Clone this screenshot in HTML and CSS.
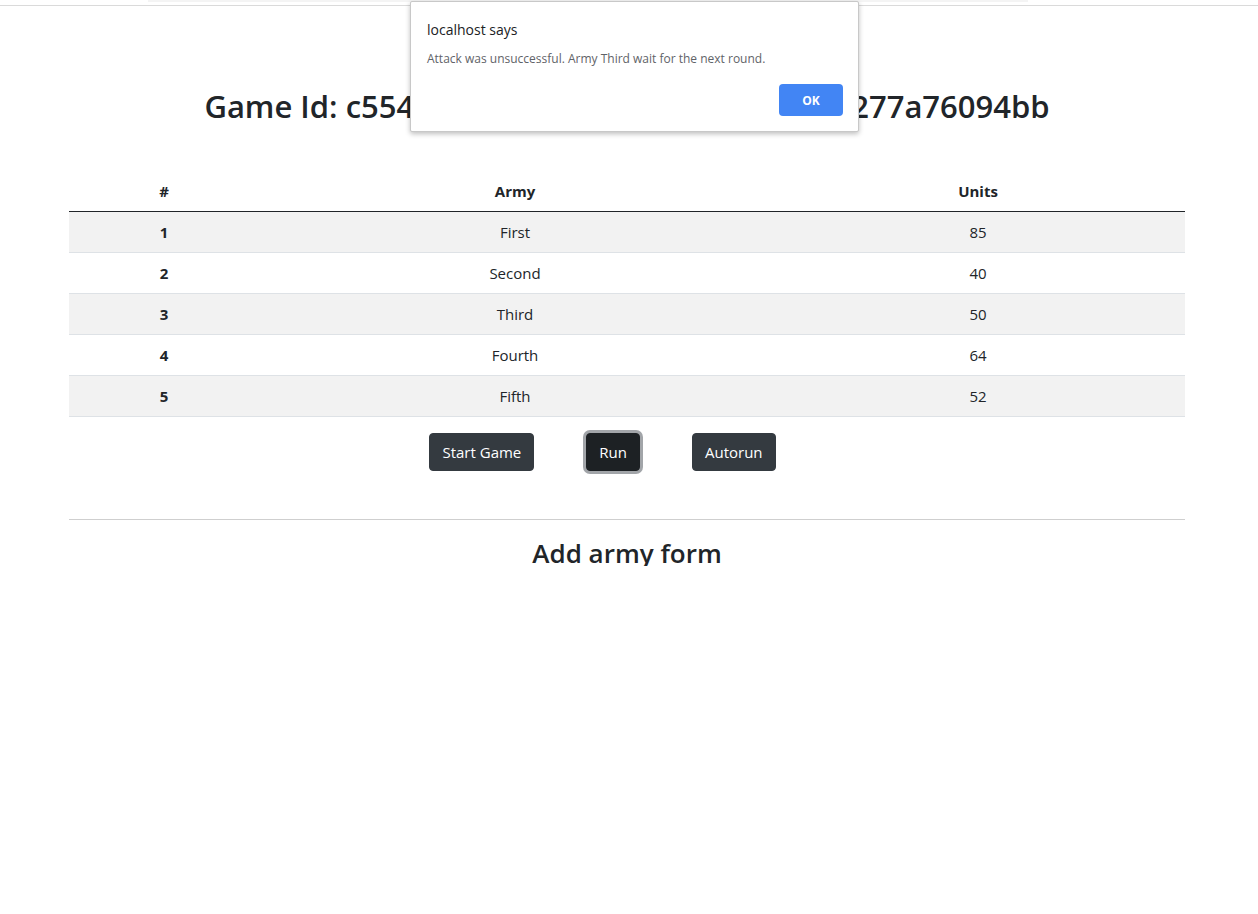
FILE: index.html
```html
<!DOCTYPE html>
<html>
<head>
<meta charset="utf-8">
<title>Game</title>
<link rel="stylesheet" href="styles.css">
</head>
<body>
<div class="topbar"><div class="tabstrip"></div></div>
<div class="viewport">
  <div class="container">
    <h2 class="game-id">Game Id: c5548e1f-3b2a-4d6c-9e8f-a0c4d1b277a76094bb</h2>
    <table class="armies">
      <thead>
        <tr><th class="c-num">#</th><th class="c-army">Army</th><th class="c-units">Units</th></tr>
      </thead>
      <tbody>
        <tr><th>1</th><td>First</td><td>85</td></tr>
        <tr><th>2</th><td>Second</td><td>40</td></tr>
        <tr><th>3</th><td>Third</td><td>50</td></tr>
        <tr><th>4</th><td>Fourth</td><td>64</td></tr>
        <tr><th>5</th><td>Fifth</td><td>52</td></tr>
      </tbody>
    </table>
    <div class="actions">
      <button class="btn">Start Game</button>
      <button class="btn btn-focus">Run</button>
      <button class="btn">Autorun</button>
    </div>
    <hr class="sep">
    <h3 class="form-title">Add army form</h3>
  </div>
</div>
<div class="dialog">
  <div class="dialog-title">localhost says</div>
  <div class="dialog-msg">Attack was unsuccessful. Army Third wait for the next round.</div>
  <div class="dialog-actions"><button class="ok">OK</button></div>
</div>
</body>
</html>
```
FILE: styles.css
```css
html, body {
  margin: 0;
  padding: 0;
  background: #fff;
}
body {
  font-family: "Open Sans", "Noto Sans", sans-serif;
  color: #212529;
  font-size: 15px;
}
.topbar {
  height: 5px;
  border-bottom: 1px solid #dadada;
  position: relative;
}
.tabstrip {
  margin-left: 148px;
  width: 880px;
  height: 2px;
  background: #f4f4f4;
}
.viewport {
  height: 560px;
  overflow: hidden;
}
.container {
  width: 1116px;
  margin-left: 69px;
}
.game-id {
  margin: 81px 0 0;
  font-size: 31px;
  font-weight: 600;
  line-height: 38px;
  text-align: center;
  color: #212529;
  letter-spacing: 0;
}
.armies {
  width: 100%;
  border-collapse: collapse;
  margin-top: 46px;
  text-align: center;
}
.armies thead th {
  height: 40px;
  font-weight: 700;
  border-bottom: 1px solid #212529;
  padding: 0;
  vertical-align: middle;
}
.c-num { width: 190px; }
.c-army { width: 512px; }
.armies tbody th,
.armies tbody td {
  height: 40px;
  padding: 0;
  border-top: 1px solid #dee2e6;
  vertical-align: middle;
}
.armies tbody th { font-weight: 700; }
.armies tbody td { font-weight: 400; }
.armies tbody tr:nth-child(odd) { background: #f2f2f2; }
.armies tbody tr:first-child th,
.armies tbody tr:first-child td { border-top: none; }
.armies tbody tr:last-child th,
.armies tbody tr:last-child td { border-bottom: 1px solid #dee2e6; }
.actions {
  display: flex;
  justify-content: center;
  gap: 52px;
  margin-top: 16px;
  padding-right: 49px;
}
.btn {
  font-family: inherit;
  font-size: 15px;
  height: 38px;
  padding: 0 12px;
  color: #fff;
  background: #343a40;
  border: 1px solid #343a40;
  border-radius: 4px;
  line-height: 36px;
}
.btn-focus {
  background: #1d2124;
  border-color: #1d2124;
  box-shadow: 0 0 0 3px #a2a5a9;
}
.sep {
  margin: 48px 0 0;
  border: 0;
  border-top: 1px solid #cfcfcf;
}
.form-title {
  margin: 16px 0 0;
  font-size: 26px;
  font-weight: 600;
  line-height: 34px;
  text-align: center;
}
.dialog {
  position: absolute;
  left: 410px;
  top: 1px;
  width: 447px;
  height: 129px;
  background: #fff;
  border: 1px solid #c8c8c8;
  border-radius: 2px;
  box-shadow: 0 2px 5px rgba(0,0,0,0.25);
  box-sizing: content-box;
}
.dialog-title {
  margin: 19px 0 0 16px;
  font-size: 14px;
  color: #202124;
  line-height: 18px;
}
.dialog-msg {
  margin: 12px 0 0 16px;
  font-size: 12px;
  color: #5f6368;
  line-height: 16px;
}
.dialog-actions {
  display: flex;
  justify-content: flex-end;
  margin: 17px 15px 0 0;
}
.ok {
  width: 64px;
  height: 32px;
  border: 0;
  border-radius: 4px;
  background: #4285f4;
  color: #fff;
  font-family: inherit;
  font-weight: 700;
  font-size: 12px;
}
```
